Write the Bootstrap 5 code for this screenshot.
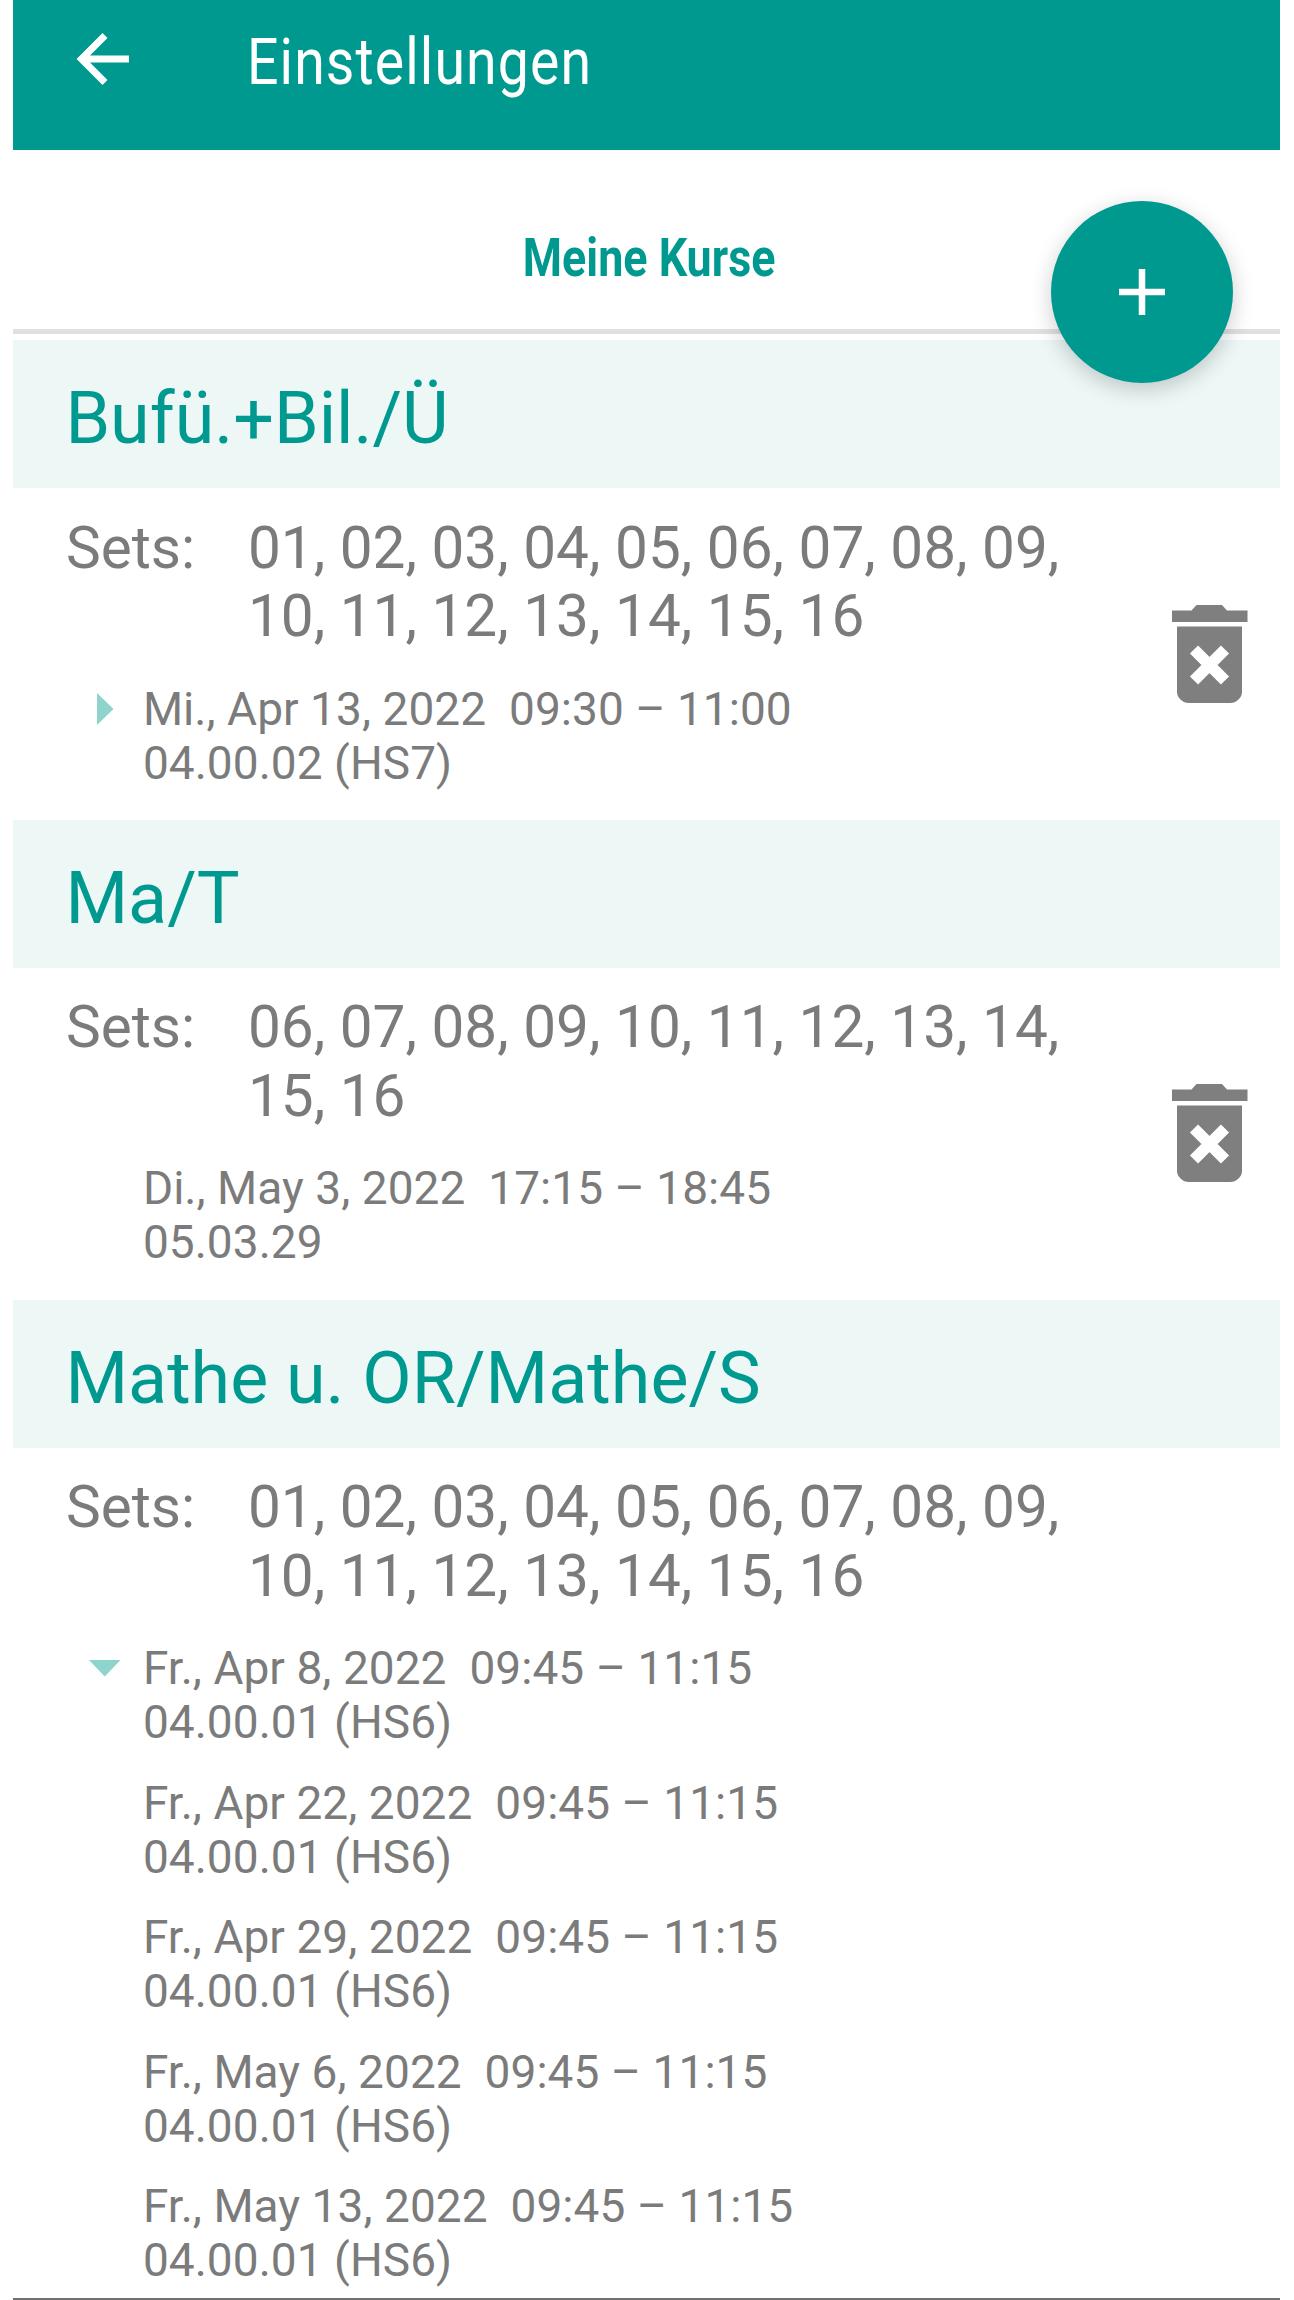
<!DOCTYPE html>
<html lang="de">
<head>
<meta charset="utf-8">
<meta name="viewport" content="width=device-width, initial-scale=1">
<title>Einstellungen</title>
<link href="https://cdn.jsdelivr.net/npm/bootstrap@5.3.0/dist/css/bootstrap.min.css" rel="stylesheet">
<style>
:root{--teal:#00998f}
body{font-family:Roboto,"Liberation Sans",sans-serif;color:#7b7b7b;background:#fff;line-height:1.172}
.screen{width:1267px;height:2300px;margin-left:13.4px}
.topbar{height:149.500px;background:var(--teal);padding:0 0 32px 60px}
.topbar h1{font-size:64px;line-height:75px;margin:7px 0 0 114px;transform-origin:0 50%;transform:scaleX(.865);letter-spacing:1.3px}
.tabstrip{height:184.500px;border-bottom:5px solid #e0e0e0;padding-top:36px;margin-bottom:6.4px}
.tabname{color:var(--teal);font-size:54px;font-weight:700;transform:scaleX(.83);margin-left:4px}
.fab{position:absolute;left:1038px;top:201px;width:182px;height:182px;background:var(--teal);box-shadow:0 6px 22px rgba(0,0,0,.2);border:0}
.band{height:148px;background:#ecf7f6;color:var(--teal);font-size:71.8px;line-height:84px;padding:36.6px 0 0 52px;margin:0;font-weight:400}
.course{height:479.9px}
.course-body{padding:25.2px 32px 0 52.5px}
.sets-row{font-size:58.5px;line-height:68.6px}
.sets-label{width:182px}
.sets-list{width:850px}
.dates{font-size:46px;line-height:54px;margin-top:30.8px;padding-left:77px;gap:26.4px}
.dates span{white-space:pre;letter-spacing:.05px}
.date-item{position:relative}
.marker{position:absolute;left:-54px;top:7px}
.bin{margin-top:91px}
.screen-end{height:2px;background:#707070}
</style>
</head>
<body>
<div class="screen position-relative overflow-hidden">
  <header class="topbar d-flex align-items-center text-white">
    <svg width="60" height="60" viewBox="0 0 60 60" fill="none" stroke="#fff" stroke-width="7"><path d="M56 30H10M32 6.500L8.500 30L32 53.500"/></svg>
    <h1 class="fw-normal">Einstellungen</h1>
  </header>
  <nav class="tabstrip d-flex justify-content-center align-items-center"><span class="tabname">Meine Kurse</span></nav>
  <button class="fab rounded-circle d-flex align-items-center justify-content-center p-0" aria-label="Kurs hinzufügen">
    <svg width="46" height="46" viewBox="0 0 46 46" stroke="#fff" stroke-width="6.500"><path d="M23 0V46M0 23H46"/></svg>
  </button>
  <main>
    <section class="course">
      <h2 class="band">Bufü.+Bil./Ü</h2>
      <div class="course-body d-flex justify-content-between align-items-start">
        <div>
          <div class="sets-row d-flex"><div class="sets-label">Sets:</div><div class="sets-list">01, 02, 03, 04, 05, 06, 07, 08, 09,<br>10, 11, 12, 13, 14, 15, 16</div></div>
          <div class="dates d-flex flex-column">
            <div class="date-item"><svg class="marker" width="34" height="40" viewBox="0 0 34 40" fill="#8fd3cd"><path d="M8 4L24.500 20L8 36Z"/></svg><span>Mi., Apr 13, 2022  09:30 – 11:00</span><br><span>04.00.02 (HS7)</span></div>
          </div>
        </div>
        <svg class="bin flex-shrink-0" width="76" height="99" viewBox="0 0 76 99"><path fill="#7f7f7f" d="M0 5.500H19.500L24.500 0H50L55 5.500H75.500V17H0ZM5 21.500H70V87Q70 91 66.500 94.500T58 98H17Q12 98 8.500 94.500T5 87Z"/><path stroke="#fff" stroke-width="11.500" d="M22 44.500L53 75.500M53 44.500L22 75.500"/></svg>
      </div>
    </section>
    <section class="course">
      <h2 class="band">Ma/T</h2>
      <div class="course-body d-flex justify-content-between align-items-start">
        <div>
          <div class="sets-row d-flex"><div class="sets-label">Sets:</div><div class="sets-list">06, 07, 08, 09, 10, 11, 12, 13, 14,<br>15, 16</div></div>
          <div class="dates d-flex flex-column">
            <div class="date-item"><span>Di., May 3, 2022  17:15 – 18:45</span><br><span>05.03.29</span></div>
          </div>
        </div>
        <svg class="bin flex-shrink-0" width="76" height="99" viewBox="0 0 76 99"><path fill="#7f7f7f" d="M0 5.500H19.500L24.500 0H50L55 5.500H75.500V17H0ZM5 21.500H70V87Q70 91 66.500 94.500T58 98H17Q12 98 8.500 94.500T5 87Z"/><path stroke="#fff" stroke-width="11.500" d="M22 44.500L53 75.500M53 44.500L22 75.500"/></svg>
      </div>
    </section>
    <section>
      <h2 class="band">Mathe u. OR/Mathe/S</h2>
      <div class="course-body">
        <div class="sets-row d-flex"><div class="sets-label">Sets:</div><div class="sets-list">01, 02, 03, 04, 05, 06, 07, 08, 09,<br>10, 11, 12, 13, 14, 15, 16</div></div>
        <div class="dates d-flex flex-column">
          <div class="date-item"><svg class="marker" width="34" height="40" viewBox="0 0 34 40" fill="#8fd3cd"><path d="M0 12H31.500L15.750 28.500Z"/></svg><span>Fr., Apr 8, 2022  09:45 – 11:15</span><br><span>04.00.01 (HS6)</span></div>
          <div class="date-item"><span>Fr., Apr 22, 2022  09:45 – 11:15</span><br><span>04.00.01 (HS6)</span></div>
          <div class="date-item"><span>Fr., Apr 29, 2022  09:45 – 11:15</span><br><span>04.00.01 (HS6)</span></div>
          <div class="date-item"><span>Fr., May 6, 2022  09:45 – 11:15</span><br><span>04.00.01 (HS6)</span></div>
          <div class="date-item"><span>Fr., May 13, 2022  09:45 – 11:15</span><br><span>04.00.01 (HS6)</span></div>
        </div>
      </div>
    </section>
  </main>
  <div class="screen-end position-absolute bottom-0 start-0 w-100"></div>
</div>
<script src="https://cdn.jsdelivr.net/npm/bootstrap@5.3.0/dist/js/bootstrap.bundle.min.js"></script>
</body>
</html>
